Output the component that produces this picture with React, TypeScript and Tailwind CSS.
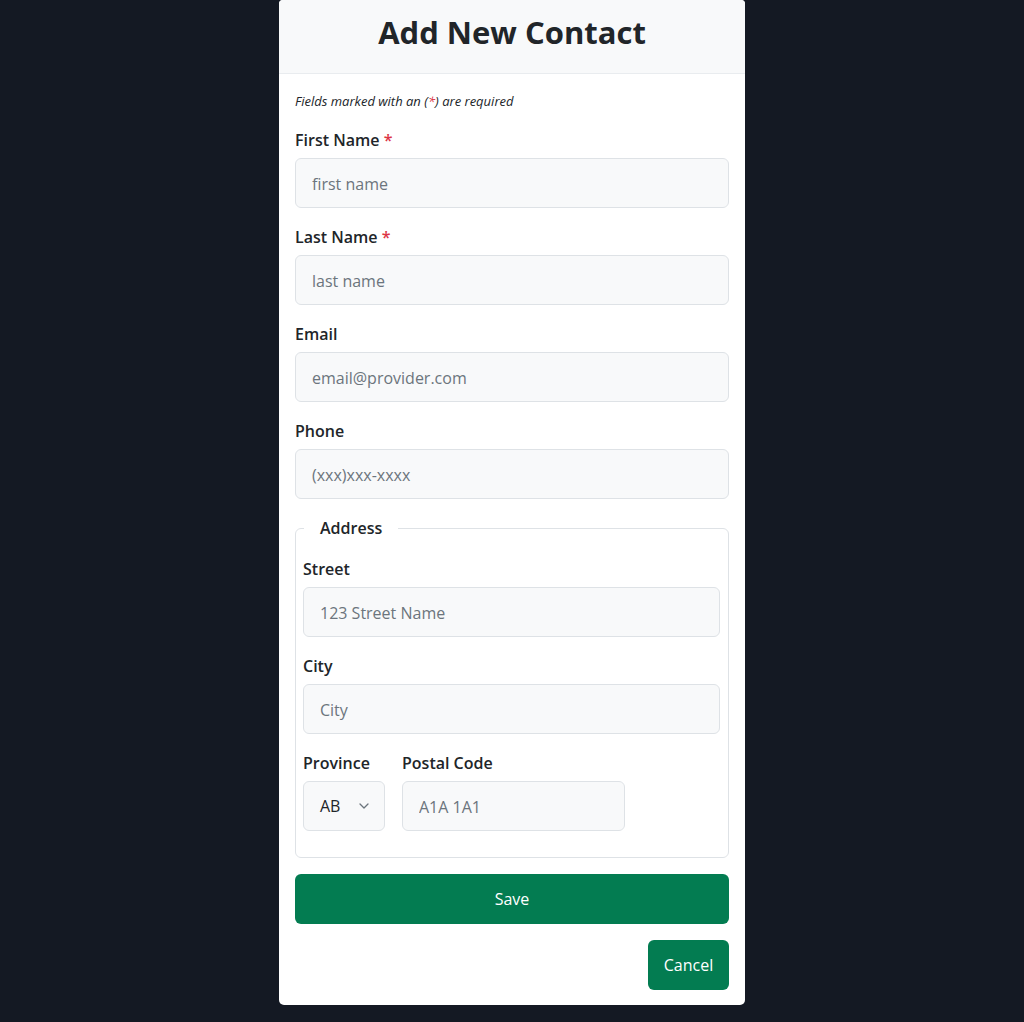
import React from "react";

const font = { fontFamily: '"Open Sans", "Noto Sans", sans-serif' };

function Field({ label, required, placeholder }: { label: string; required?: boolean; placeholder: string }) {
  return (
    <div className="mb-[17px]">
      <label className="block mb-[6px] text-[16px] leading-[24px] font-semibold text-[#212529]">
        {label}
        {required && <span className="text-[#dc3545]"> *</span>}
      </label>
      <input
        className="block w-full h-[50px] px-[16px] pt-[2px] rounded-[6px] border border-[#dee2e6] bg-[#f8f9fa] text-[16px] text-[#212529] placeholder:text-[#6c757d] outline-none"
        placeholder={placeholder}
      />
    </div>
  );
}

export default function App() {
  return (
    <div className="min-h-[1022px] bg-[#141923] flex justify-center" style={font}>
      <div className="w-[466px] h-[1005px] bg-white rounded-b-[5px] rounded-t-[4px] flex flex-col overflow-hidden">
        <div className="h-[74px] bg-[#f8f9fa] border-b border-[#e9ecef] flex items-center justify-center">
          <h1 className="text-[31px] font-bold text-[#212529] leading-none -mt-[9px]">Add New Contact</h1>
        </div>
        <div className="px-[16px] pt-[18px]">
          <p className="italic text-[13px] leading-[18px] text-[#212529] mb-[18px]">
            Fields marked with an (<span className="text-[#dc3545]">*</span>) are required
          </p>
          <Field label="First Name" required placeholder="first name" />
          <Field label="Last Name" required placeholder="last name" />
          <Field label="Email" placeholder="email@provider.com" />
          <Field label="Phone" placeholder="(xxx)xxx-xxxx" />
          <fieldset className="border border-[#dee2e6] rounded-[6px] pl-[7px] pr-[8px] pb-[26px] mt-[15px]">
            <legend className="ml-[1px] px-[16px] text-[16px] leading-[24px] font-semibold text-[#212529]">Address</legend>
            <div className="pt-[17px]">
              <Field label="Street" placeholder="123 Street Name" />
              <Field label="City" placeholder="City" />
              <div className="flex gap-[17px]">
                <div>
                  <label className="block mb-[6px] text-[16px] leading-[24px] font-semibold text-[#212529]">Province</label>
                  <div className="relative w-[82px] h-[50px] rounded-[6px] border border-[#dee2e6] bg-[#f8f9fa] flex items-center pl-[16px] text-[16px] text-[#212529]">
                    AB
                    <svg className="absolute right-[14px] top-[20px]" width="12" height="8" viewBox="0 0 12 8" fill="none">
                      <path d="M2 2l4 4 4-4" stroke="#6c757d" strokeWidth="1.3" strokeLinecap="round" strokeLinejoin="round" />
                    </svg>
                  </div>
                </div>
                <div>
                  <label className="block mb-[6px] text-[16px] leading-[24px] font-semibold text-[#212529]">Postal Code</label>
                  <input
                    className="block w-[223px] h-[50px] px-[16px] pt-[2px] rounded-[6px] border border-[#dee2e6] bg-[#f8f9fa] text-[16px] placeholder:text-[#6c757d] outline-none"
                    placeholder="A1A 1A1"
                  />
                </div>
              </div>
            </div>
          </fieldset>
          <button className="mt-[16px] w-full h-[50px] rounded-[6px] bg-[#037c51] text-white text-[16px]">Save</button>
          <div className="flex justify-end mt-[16px]">
            <button className="w-[81px] h-[50px] rounded-[6px] bg-[#037c51] text-white text-[16px]">Cancel</button>
          </div>
        </div>
      </div>
    </div>
  );
}
